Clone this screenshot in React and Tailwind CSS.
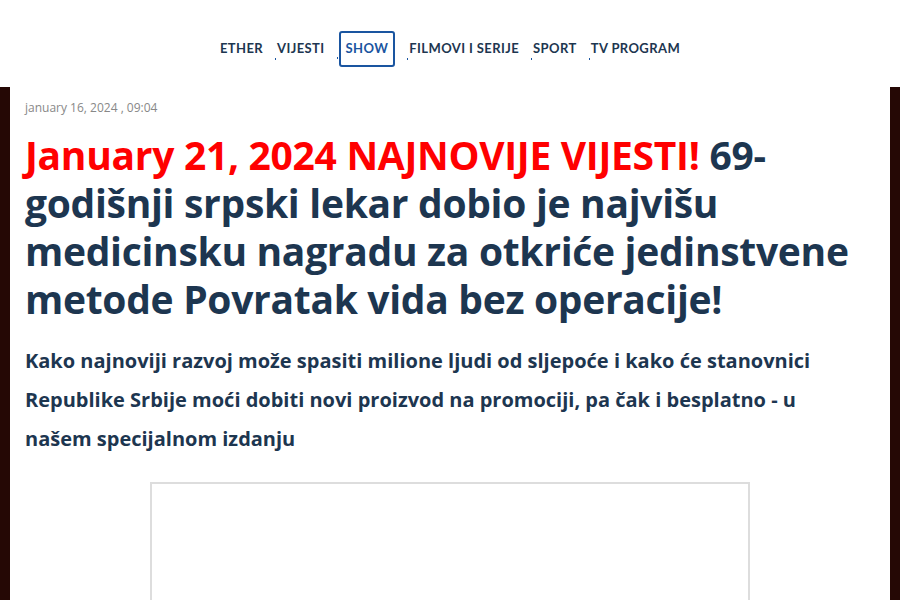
const navItems = ['ETHER', 'VIJESTI', 'SHOW', 'FILMOVI I SERIJE', 'SPORT', 'TV PROGRAM'];

const Nav = () => (
    <header className="h-[87px] bg-white flex items-center justify-center pt-[11px]">
        <nav className="flex items-center gap-[12px] text-[13px] font-bold tracking-[0.4px] text-[#1d3650] font-['Lato',sans-serif]">
            {navItems.map((item, i) => {
                const active = item === 'SHOW';
                return (
                    <div key={item} className="flex items-center">
                        {i > 0 && <span className="w-[1px] h-[2px] bg-[#1a55a0] self-end mb-[8px] mr-[1px]" />}
                        <a
                            className={
                                active
                                    ? 'px-[5px] py-[6px] border-2 border-[#1a55a0] rounded-[3px] text-[#1a55a0]'
                                    : 'py-[9px]'
                            }
                        >
                            {item}
                        </a>
                    </div>
                );
            })}
        </nav>
    </header>
);

export default function App() {
    return (
        <div className="min-h-[600px] bg-[#250805] font-['Open_Sans',sans-serif]">
            <Nav />
            <main className="mx-[10px] bg-white pl-[15px] pr-[30px] pt-[12px] pb-10">
                <p className="text-[12px] text-[#888]">january 16, 2024 , 09:04</p>
                <h1 className="mt-[14px] text-[39px] leading-[48px] font-bold tracking-[-0.3px] text-[#1d3650]">
                    <span className="text-[#ff0000]">January 21, 2024 NAJNOVIJE VIJESTI!</span> 69-godišnji
                    srpski lekar dobio je najvišu medicinsku nagradu za otkriće jedinstvene metode Povratak vida
                    bez operacije!
                </h1>
                <p className="mt-[18px] text-[20px] leading-[39px] font-bold text-[#1d3650]">
                    Kako najnoviji razvoj može spasiti milione ljudi od sljepoće i kako će stanovnici Republike
                    Srbije moći dobiti novi proizvod na promociji, pa čak i besplatno - u našem specijalnom izdanju
                </p>
                <div className="mt-[24px] ml-[125px] w-[600px] h-[300px] border-2 border-[#dddddd]" />
            </main>
        </div>
    );
}
